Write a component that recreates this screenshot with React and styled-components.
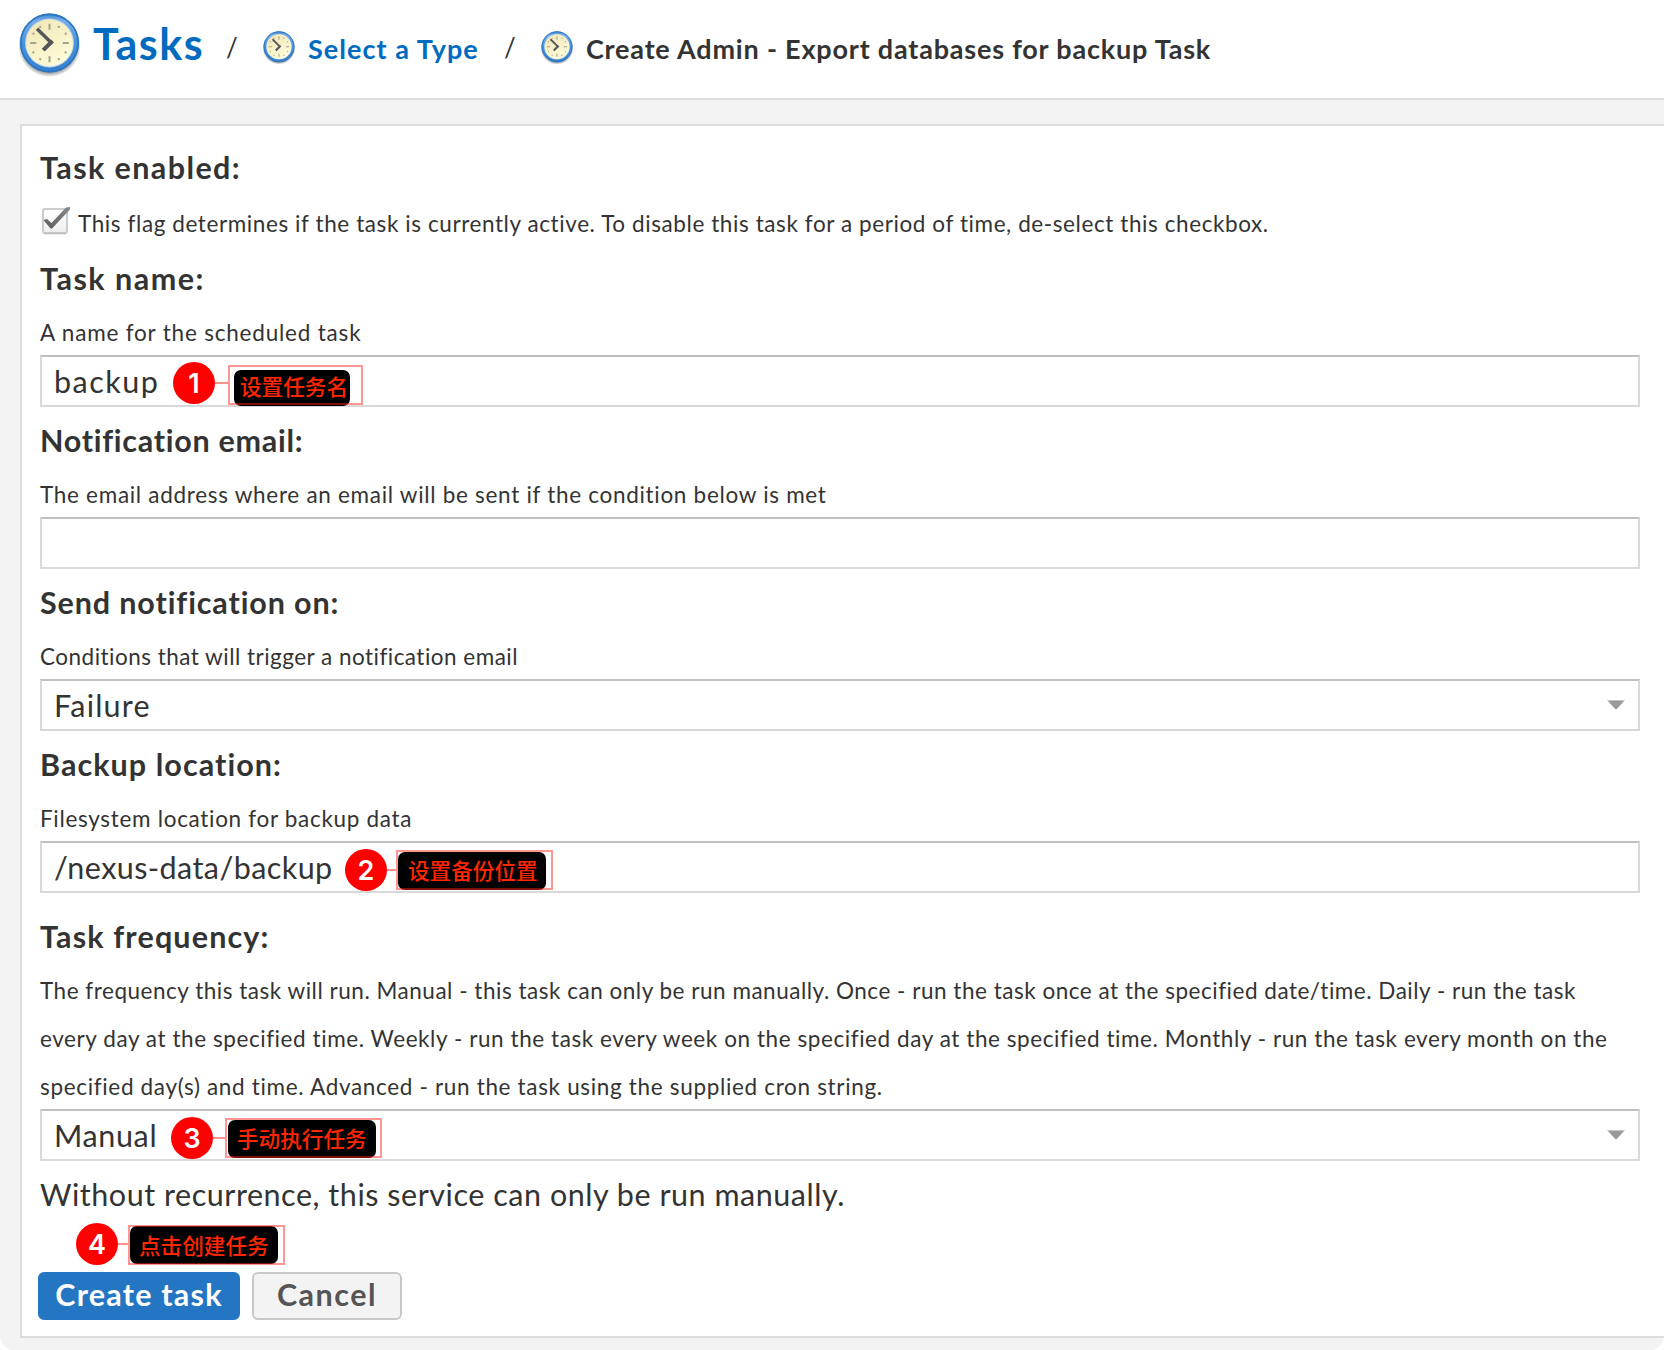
import React from "react";
import styled, { createGlobalStyle } from "styled-components";

const GlobalStyle = createGlobalStyle`
  * { box-sizing: border-box; }
  body {
    margin: 0;
    background: #fff;
    color: #333;
    font-family: Lato, "Noto Sans CJK SC", sans-serif;
    font-variant-ligatures: none;
  }
`;

const Page = styled.div`
  height: 1350px;
  background: #f3f3f3;
  border-radius: 14px;
  overflow: hidden;
`;

const Header = styled.header`
  display: flex;
  height: 100px;
  padding-left: 19px;
  background: #fff;
  border-bottom: 2px solid #ddd;
  white-space: nowrap;
`;

const Crumb = styled.div`
  display: flex;
  width: ${(p) => p.$width}px;
  color: ${(p) => (p.$link ? "#006bbf" : "#333")};
`;

const CrumbText = styled.span`
  font-size: ${(p) => (p.$large ? 43 : 27)}px;
  font-weight: 700;
  line-height: ${(p) => (p.$large ? 87 : 97)}px;
  letter-spacing: ${(p) => p.$ls || 0}px;
  margin-left: ${(p) => (p.$large ? 13 : 13)}px;
`;

const Slash = styled.span`
  width: ${(p) => p.$width}px;
  font-size: 26px;
  line-height: 94px;
`;

const ClockSvg = styled.svg`
  flex: none;
  display: block;
  margin-top: ${(p) => p.$top}px;
`;

const Panel = styled.main`
  height: 1214px;
  margin: 24px 0 0 20px;
  padding: 8px 24px 0 18px;
  background: #fff;
  border: 2px solid #ddd;
  border-right: 0;
`;

const Field = styled.section`
  position: relative;
  margin-top: ${(p) => p.$gap || 0}px;
`;

const Heading = styled.h2`
  margin: 0;
  padding-top: 5px;
  font-size: 30.5px;
  font-weight: 700;
  line-height: 56px;
  letter-spacing: ${(p) => p.$ls || 0}px;
`;

const Description = styled.p`
  margin: 3px 0 -2px;
  font-size: 22.5px;
  line-height: 48px;
  white-space: nowrap;
`;

const Line = styled.span`
  display: block;
  letter-spacing: ${(p) => p.$ls || 0}px;
`;

const FlagRow = styled.div`
  display: flex;
  height: 47px;
  margin-top: 3px;
  font-size: 22.5px;
  line-height: 51px;
  white-space: nowrap;
`;

const CheckSvg = styled.svg`
  display: block;
  flex: none;
  margin: 6px 8px 0 0;
`;

const Control = styled.div`
  display: flex;
  justify-content: space-between;
  height: 52px;
  padding: 0 13px 0 12px;
  border: 2px solid #d9d9d9;
  border-top-color: #c0c0c0;
  font-size: 30.5px;
  line-height: 48px;
`;

const Value = styled.span`
  letter-spacing: ${(p) => p.$ls || 0}px;
`;

const Arrow = styled.svg`
  display: block;
  margin-top: 19px;
`;

const Recurrence = styled.p`
  margin: 3px 0 48px;
  font-size: 30.5px;
  line-height: 60px;
  letter-spacing: ${(p) => p.$ls || 0}px;
`;

const Actions = styled.div`
  position: relative;
  display: flex;
  gap: 12px;
  margin-left: -2px;
`;

const Button = styled.button`
  width: ${(p) => p.$width}px;
  height: 48px;
  padding: 0 0 4px;
  border: 2px solid ${(p) => (p.$primary ? "#2476c3" : "#c8c8c8")};
  border-radius: 6px;
  background: ${(p) => (p.$primary ? "#2476c3" : "#f3f3f3")};
  color: ${(p) => (p.$primary ? "#fff" : "#555")};
  font: 700 30.5px/40px Lato, sans-serif;
  letter-spacing: ${(p) => p.$ls || 0}px;
`;

const Callout = styled.div`
  position: absolute;
  left: ${(p) => p.$x}px;
  bottom: ${(p) => p.$bottom}px;
  display: flex;
  height: 42px;
`;

const Badge = styled.span`
  width: 42px;
  height: 42px;
  border-radius: 50%;
  background: #f00;
  color: #fff;
  font: 600 27px/43px Inter, sans-serif;
  text-align: center;
`;

const Connector = styled.i`
  width: ${(p) => p.$width}px;
  height: 2px;
  margin-top: 20px;
  background: #ff918c;
`;

const NoteFrame = styled.div`
  position: relative;
  width: ${(p) => p.$width}px;
  height: 40px;
  margin-top: ${(p) => p.$top}px;
  padding: ${(p) => p.$pad};

  &::after {
    content: "";
    position: absolute;
    inset: 0;
    border: 2px solid rgba(255, 36, 28, 0.48);
  }
`;

const NoteLabel = styled.div`
  width: ${(p) => p.$width}px;
  height: ${(p) => p.$height}px;
  padding-left: ${(p) => p.$indent}px;
  border-radius: 7px;
  background: #000;
  color: #ff2600;
  font: 500 21.6px/${(p) => p.$lh}px "Noto Sans CJK SC", sans-serif;
  white-space: nowrap;
`;

const hours = [0, 30, 60, 90, 120, 150, 180, 210, 240, 270, 300, 330];

function Clock({ size, top }) {
  const id = "clock" + size;
  return (
    <ClockSvg $top={top} width={size} height={size * 1.05} viewBox="0 0 60 63">
      <defs>
        <linearGradient id={id + "rim"} x1="0" y1="0" x2="0" y2="1">
          <stop offset="0" stopColor="#3c85cf" />
          <stop offset="0.12" stopColor="#74ade8" />
          <stop offset="0.5" stopColor="#4a93dc" />
          <stop offset="1" stopColor="#337fcd" />
        </linearGradient>
        <linearGradient id={id + "face"} x1="0" y1="0" x2="0.6" y2="1">
          <stop offset="0" stopColor="#f1e6b4" />
          <stop offset="1" stopColor="#fdfbd9" />
        </linearGradient>
        <radialGradient id={id + "shadow"}>
          <stop offset="0.85" stopColor="#555" stopOpacity="0.6" />
          <stop offset="1" stopColor="#555" stopOpacity="0" />
        </radialGradient>
      </defs>
      <circle cx="30" cy="32" r="31" fill={`url(#${id}shadow)`} />
      <circle cx="30" cy="29.5" r="29" fill={`url(#${id}rim)`} />
      <circle cx="30" cy="29.5" r="28.2" fill="none" stroke="#2a74c2" strokeWidth="1.6" />
      <circle cx="30" cy="29.5" r="24" fill="#c6d8e6" />
      <circle cx="30" cy="29.5" r="23" fill={`url(#${id}face)`} />
      {hours.map((a) => (
        <line
          key={a}
          x1="30"
          x2="30"
          y1={a % 90 ? 10.2 : 10.5}
          y2={a % 90 ? 12.2 : 16.5}
          stroke="#a5a28c"
          strokeWidth="2"
          transform={`rotate(${a} 30 29.5)`}
        />
      ))}
      <path d="M17.7 15.5L31.8 29.2" stroke="#55555a" strokeWidth="3.4" fill="none" />
      <path d="M33 27.5L23.8 36.5" stroke="#55555a" strokeWidth="4" fill="none" />
    </ClockSvg>
  );
}

function Check() {
  return (
    <CheckSvg width="30" height="32" viewBox="0 0 30 32">
      <defs>
        <linearGradient id="boxFill" x1="0" y1="0" x2="0" y2="1">
          <stop offset="0" stopColor="#fff" />
          <stop offset="1" stopColor="#eee" />
        </linearGradient>
        <linearGradient id="tickFill" x1="0" y1="1" x2="1" y2="0">
          <stop offset="0" stopColor="#5c5c5c" />
          <stop offset="1" stopColor="#8a8a8a" />
        </linearGradient>
      </defs>
      <rect x="3" y="5" width="24" height="24" rx="2" fill="url(#boxFill)" stroke="#ccc" strokeWidth="2" />
      <path d="M4 29.5h22" stroke="#bcbcbc" strokeWidth="1.5" />
      <path d="M3.5 16L7 15L11.5 19L26 3.5L30 3L30 5.5L12 24.5L10.5 24.5Z" fill="url(#tickFill)" />
    </CheckSvg>
  );
}

function DropArrow() {
  return (
    <Arrow width="18" height="10" viewBox="0 0 18 10">
      <path d="M0.5 0.5H17.5L9.8 9H8.2Z" fill="#999" />
      <path d="M0.5 0.5H17.5" stroke="#c4c4c4" />
    </Arrow>
  );
}

function Note({ n, x, bottom, gap, width, top, pad, labelWidth, labelHeight, indent, lh, children }) {
  return (
    <Callout $x={x} $bottom={bottom}>
      <Badge>{n}</Badge>
      <Connector $width={gap} />
      <NoteFrame $width={width} $top={top} $pad={pad}>
        <NoteLabel $width={labelWidth} $height={labelHeight} $indent={indent} $lh={lh}>
          {children}
        </NoteLabel>
      </NoteFrame>
    </Callout>
  );
}

export default function App() {
  return (
    <>
      <GlobalStyle />
      <Page>
        <Header>
          <Crumb $link $width={207}>
            <Clock size={61} top={13} />
            <CrumbText $large $ls={1.5}>Tasks</CrumbText>
          </Crumb>
          <Slash $width={37}>/</Slash>
          <Crumb $link $width={241}>
            <Clock size={32} top={31} />
            <CrumbText $ls={1.04}>Select a Type</CrumbText>
          </Crumb>
          <Slash $width={37}>/</Slash>
          <Crumb $width={700}>
            <Clock size={32} top={31} />
            <CrumbText $ls={0.8}>Create Admin - Export databases for backup Task</CrumbText>
          </Crumb>
        </Header>
        <Panel>
          <Field>
            <Heading $ls={1.4}>Task enabled:</Heading>
            <FlagRow>
              <Check />
              <Line $ls={0.59}>
                This flag determines if the task is currently active. To disable this task for a period of time, de-select this checkbox.
              </Line>
            </FlagRow>
          </Field>
          <Field>
            <Heading $ls={1.5}>Task name:</Heading>
            <Description>
              <Line $ls={0.8}>A name for the scheduled task</Line>
            </Description>
            <Control>
              <Value $ls={1.5}>backup</Value>
            </Control>
            <Note n={1} x={133} bottom={3} gap={13} width={135} top={3} pad="5px 0 0 6px" labelWidth={116} labelHeight={36} indent={6} lh={31}>
              设置任务名
            </Note>
          </Field>
          <Field>
            <Heading $ls={0.72}>Notification email:</Heading>
            <Description>
              <Line $ls={0.7}>The email address where an email will be sent if the condition below is met</Line>
            </Description>
            <Control />
          </Field>
          <Field>
            <Heading $ls={0.88}>Send notification on:</Heading>
            <Description>
              <Line $ls={0.48}>Conditions that will trigger a notification email</Line>
            </Description>
            <Control>
              <Value $ls={1.2}>Failure</Value>
              <DropArrow />
            </Control>
          </Field>
          <Field>
            <Heading $ls={1.06}>Backup location:</Heading>
            <Description>
              <Line $ls={0.69}>Filesystem location for backup data</Line>
            </Description>
            <Control>
              <Value $ls={0.43}>/nexus-data/backup</Value>
            </Control>
            <Note n={2} x={305} bottom={2} gap={9} width={157} top={1} pad="2px 0 0 2px" labelWidth={148} labelHeight={38} indent={10} lh={36}>
              设置备份位置
            </Note>
          </Field>
          <Field $gap={10}>
            <Heading $ls={1.15}>Task frequency:</Heading>
            <Description>
              <Line $ls={0.515}>
                The frequency this task will run. Manual - this task can only be run manually. Once - run the task once at the specified date/time. Daily - run the task
              </Line>
              <Line $ls={0.57}>
                every day at the specified time. Weekly - run the task every week on the specified day at the specified time. Monthly - run the task every month on the
              </Line>
              <Line $ls={0.67}>specified day(s) and time. Advanced - run the task using the supplied cron string.</Line>
            </Description>
            <Control>
              <Value $ls={0.64}>Manual</Value>
              <DropArrow />
            </Control>
            <Note n={3} x={131} bottom={2} gap={12} width={157} top={1} pad="2px 0 0 3px" labelWidth={148} labelHeight={38} indent={9} lh={36}>
              手动执行任务
            </Note>
          </Field>
          <Recurrence $ls={0.53}>Without recurrence, this service can only be run manually.</Recurrence>
          <Actions>
            <Button $primary $width={202} $ls={1.2}>Create task</Button>
            <Button $width={150} $ls={1.5}>Cancel</Button>
            <Note n={4} x={38} bottom={55} gap={10} width={157} top={2} pad="1px 0 0 2px" labelWidth={148} labelHeight={38} indent={9} lh={38}>
              点击创建任务
            </Note>
          </Actions>
        </Panel>
      </Page>
    </>
  );
}
